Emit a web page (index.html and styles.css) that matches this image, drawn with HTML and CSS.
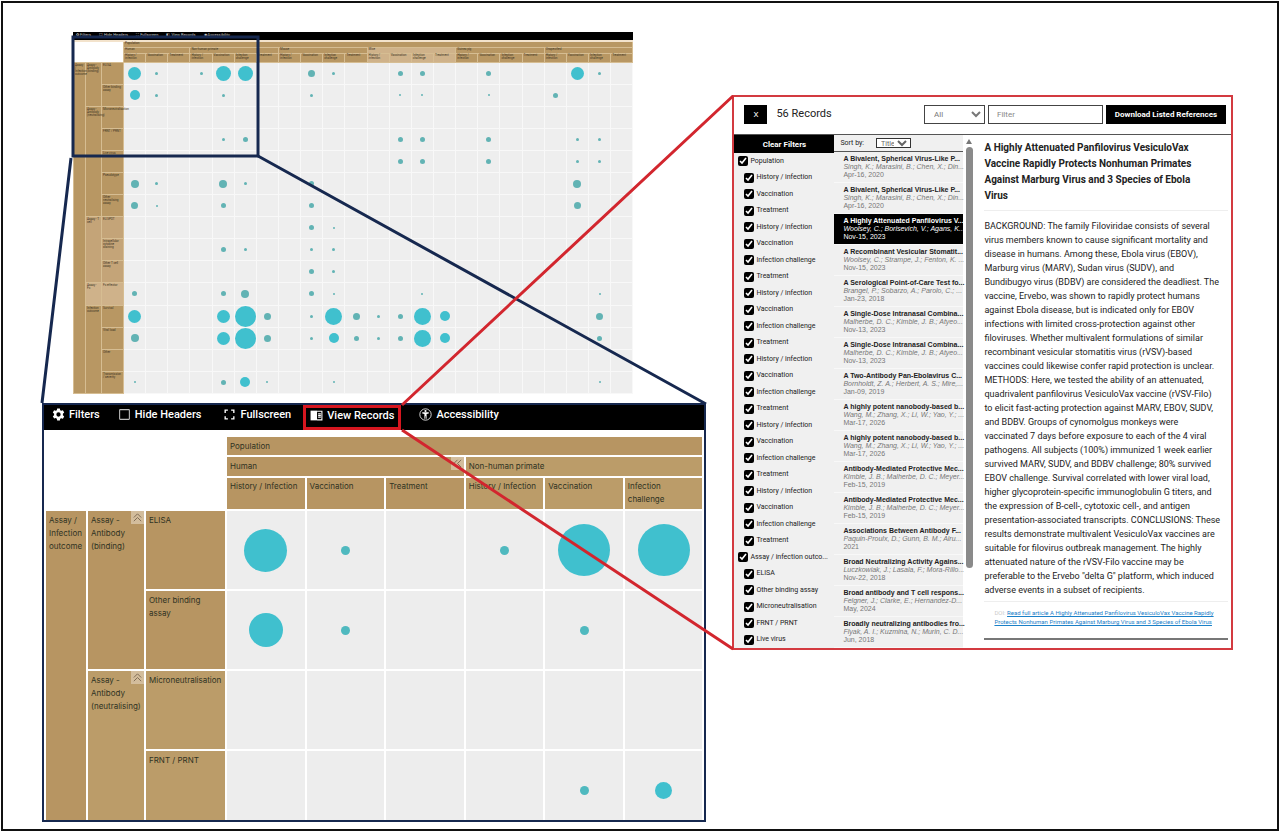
FILE: index.html
```html
<!DOCTYPE html>
<html lang="en">
<head>
   <meta charset="UTF-8">
   <meta name="viewport" content="width=device-width, initial-scale=1.0">
   <title>Evidence map</title>
   <link rel="stylesheet" href="styles.css">
</head>
<body>
   <main class="figure">
      <div class="maps">
         <section class="overview">
            <nav class="mini-bar">
               <span>✿ Filters</span><span>☐ Hide Headers</span><span>⛶ Fullscreen</span><span>◧ View Records</span><span>◉ Accessibility</span>
            </nav>
            <table class="mini-map">
               <colgroup>
                  <col class="mini-a"><col class="mini-b"><col class="mini-c"><col span="23">
               </colgroup>
               <thead id="miniHead"></thead>
               <tbody id="miniBody"></tbody>
            </table>
         </section>

         <section class="detail">
            <nav class="toolbar">
               <button type="button">
                  <svg class="icon" viewBox="0 0 24 24"><path fill="currentColor" fill-rule="evenodd" d="M9.5 1h5l.6 3.2 1.9 1.1 3.1-1.1 2.4 4.2-2.4 2.2v2.8l2.4 2.2-2.4 4.2-3.1-1.1-1.9 1.1-.6 3.2h-5l-.6-3.2L7 18.500l-3.100 1.100-2.400-4.200 2.400-2.200v-2.800L1.500 8.400l2.400-4.200L7 5.300l1.900-1.100zM12 8a4 4 0 1 0 0 8 4 4 0 0 0 0-8z"/></svg>
                  Filters
               </button>
               <button type="button" class="headers">
                  <svg class="icon" viewBox="0 0 24 24"><rect x="3" y="3" width="18" height="18" rx="1" fill="none" stroke="#bbb" stroke-width="2"/></svg>
                  Hide Headers
               </button>
               <button type="button">
                  <svg class="icon" viewBox="0 0 24 24"><path fill="none" stroke="currentColor" stroke-width="2.500" d="M9 4H4v5M15 4h5v5M9 20H4v-5M15 20h5v-5"/></svg>
                  Fullscreen
               </button>
               <button type="button" class="active">
                  <svg class="icon" viewBox="0 0 24 24"><path fill="currentColor" d="M1 3h12v18H1z"/><path fill="none" stroke="currentColor" stroke-width="2" d="M13 4h9v16h-9M15 9h5M15 12h5M15 15h5"/></svg>
                  View Records
               </button>
               <button type="button">
                  <svg class="icon" viewBox="0 0 24 24"><circle cx="12" cy="12" r="10.500" fill="none" stroke="currentColor" stroke-width="1.500"/><circle cx="12" cy="5.500" r="2" fill="currentColor"/><path fill="currentColor" d="M6 8h12v2l-4 1v9h-1.500v-5h-1v5H10v-9l-4-1z"/></svg>
                  Accessibility
               </button>
            </nav>
            <table class="map">
               <colgroup>
                  <col class="col-a"><col class="col-b"><col class="col-c"><col span="6">
               </colgroup>
               <thead>
                  <tr class="row-pop">
                     <td colspan="3" rowspan="3"></td>
                     <th colspan="6">Population</th>
                  </tr>
                  <tr class="row-group">
                     <th colspan="3">Human <button type="button" class="fold" aria-label="Collapse Human"><svg viewBox="0 0 12 12"><path d="M6 2 2 6l4 4M10 2 6 6l4 4"/></svg></button></th>
                     <th colspan="3" class="tan">Non-human primate</th>
                  </tr>
                  <tr class="row-sub">
                     <th>History / Infection</th>
                     <th>Vaccination</th>
                     <th>Treatment</th>
                     <th class="tan">History / Infection</th>
                     <th class="tan">Vaccination</th>
                     <th class="tan">Infection<br>challenge</th>
                  </tr>
               </thead>
               <tbody>
                  <tr>
                     <th rowspan="4">Assay / Infection outcome</th>
                     <th rowspan="2">Assay -<br>Antibody (binding) <button type="button" class="fold" aria-label="Collapse binding"><svg viewBox="0 0 12 12"><path d="M2 6l4-4 4 4M2 10l4-4 4 4"/></svg></button></th>
                     <th>ELISA</th>
                     <td><i class="dot d43"></i></td>
                     <td><i class="dot d9"></i></td>
                     <td></td>
                     <td><i class="dot d9"></i></td>
                     <td><i class="dot d52"></i></td>
                     <td><i class="dot d52"></i></td>
                  </tr>
                  <tr>
                     <th>Other binding<br>assay</th>
                     <td><i class="dot d34"></i></td>
                     <td><i class="dot d9"></i></td>
                     <td></td>
                     <td></td>
                     <td><i class="dot d9"></i></td>
                     <td></td>
                  </tr>
                  <tr>
                     <th rowspan="2" class="tan">Assay -<br>Antibody (neutralising) <button type="button" class="fold" aria-label="Collapse neutralising"><svg viewBox="0 0 12 12"><path d="M2 6l4-4 4 4M2 10l4-4 4 4"/></svg></button></th>
                     <th class="tan">Microneutralisation</th>
                     <td></td><td></td><td></td><td></td><td></td><td></td>
                  </tr>
                  <tr>
                     <th class="tan">FRNT / PRNT</th>
                     <td></td>
                     <td></td>
                     <td></td>
                     <td></td>
                     <td><i class="dot d9"></i></td>
                     <td><i class="dot d17"></i></td>
                  </tr>
               </tbody>
            </table>
         </section>
      </div>

      <section class="records">
         <header class="records-head">
            <button type="button" class="close">X</button>
            <h1>56 Records</h1>
            <select class="scope" aria-label="Field"><option>All</option></select>
            <input class="search" type="text" placeholder="Filter" aria-label="Filter">
            <button type="button" class="download">Download Listed References</button>
         </header>
         <div class="records-body">
            <div class="filters">
               <button type="button" class="clear">Clear Filters</button>
               <div class="filter-list" id="filterList"></div>
            </div>
            <div class="list">
               <div class="sort">
                  <label for="sortBy">Sort by:</label>
                  <select id="sortBy"><option>Title</option></select>
               </div>
               <ul class="record-list" id="recordList"></ul>
            </div>
            <div class="scroll"><span class="arrow"></span><span class="thumb"></span></div>
            <article class="article">
               <h2>A Highly Attenuated Panfilovirus VesiculoVax Vaccine Rapidly Protects Nonhuman Primates Against Marburg Virus and 3 Species of Ebola Virus</h2>
               <p class="abstract">BACKGROUND: The family Filoviridae consists of several
virus members known to cause significant mortality and
disease in humans. Among these, Ebola virus (EBOV),
Marburg virus (MARV), Sudan virus (SUDV), and
Bundibugyo virus (BDBV) are considered the deadliest. The
vaccine, Ervebo, was shown to rapidly protect humans
against Ebola disease, but is indicated only for EBOV
infections with limited cross-protection against other
filoviruses. Whether multivalent formulations of similar
recombinant vesicular stomatitis virus (rVSV)-based
vaccines could likewise confer rapid protection is unclear.
METHODS: Here, we tested the ability of an attenuated,
quadrivalent panfilovirus VesiculoVax vaccine (rVSV-Filo)
to elicit fast-acting protection against MARV, EBOV, SUDV,
and BDBV. Groups of cynomolgus monkeys were
vaccinated 7 days before exposure to each of the 4 viral
pathogens. All subjects (100%) immunized 1 week earlier
survived MARV, SUDV, and BDBV challenge; 80% survived
EBOV challenge. Survival correlated with lower viral load,
higher glycoprotein-specific immunoglobulin G titers, and
the expression of B-cell-, cytotoxic cell-, and antigen
presentation-associated transcripts. CONCLUSIONS: These
results demonstrate multivalent VesiculoVax vaccines are
suitable for filovirus outbreak management. The highly
attenuated nature of the rVSV-Filo vaccine may be
preferable to the Ervebo "delta G" platform, which induced
adverse events in a subset of recipients.</p>
               <p class="source">DOI: <a href="#">Read full article A Highly Attenuated Panfilovirus VesiculoVax Vaccine Rapidly Protects Nonhuman Primates Against Marburg Virus and 3 Species of Ebola Virus</a></p>
            </article>
         </div>
      </section>

      <svg class="callouts" viewBox="0 0 1280 832" preserveAspectRatio="none" aria-hidden="true">
         <g class="navy">
            <rect x="73" y="37" width="185" height="119"/>
            <path d="M71 158 42 403M258 156 706 404"/>
         </g>
         <path class="red" d="M402 405 733 96M402 430 733 649"/>
      </svg>
   </main>
   <script src="script.js"></script>
</body>
</html>
```
FILE: styles.css
```css
body {
   margin: 0;
   background-color: #fff;
   font-family: Roboto, 'Liberation Sans', sans-serif;
   color: #222;
}
* {
   box-sizing: border-box;
}
button, input, select {
   font-family: inherit;
   margin: 0;
}
button {
   cursor: pointer;
}
.figure {
   position: relative;
   display: grid;
   grid-template-columns: 665fr 501fr;
   column-gap: 26px;
   align-items: start;
   min-height: 830px;
   margin: 1px;
   padding: 29px 44px 0 39px;
   border: 2px solid #111;
}

/* overview map */
.overview {
   margin: 0 73px 9px 31px;
}
.mini-bar {
   display: flex;
   gap: 8px;
   height: 8px;
   padding-left: 3px;
   background-color: #000;
   color: #ccc;
   font-size: 4px;
   line-height: 6px;
}
.mini-map {
   width: 100%;
   height: 354px;
   table-layout: fixed;
   border-collapse: collapse;
   border-top: 2px solid #f3e3cc;
}
.mini-a {
   width: 12px;
}
.mini-b {
   width: 16px;
}
.mini-c {
   width: 22px;
}
.mini-map th {
   padding: 1px;
   background-color: #b89763;
   border: 1px solid #d6bd92;
   color: #3d3524;
   font-size: 3px;
   font-weight: normal;
   line-height: 3px;
   text-align: left;
   vertical-align: top;
}
.mini-map .light {
   background-color: #c4a478;
}
.mini-map .lighter {
   background-color: #cfb28a;
}
.mini-map thead th {
   height: 6px;
   padding: 0 1px;
}
.mini-map thead tr:last-child th {
   height: 9px;
}
.mini-map td {
   height: 22px;
   padding: 0;
   background-color: #eee;
   border: 1px solid #f8f8f8;
}
.mini-map thead td {
   height: auto;
   background-color: #fff;
   border: none;
}
.mini-map .wrap {
   display: flex;
   align-items: center;
   justify-content: center;
   height: 21px;
}
.dot {
   display: block;
   margin: 0 auto;
   border-radius: 50%;
   background-color: #40c0ce;
}
.mini-map .dot {
   flex: none;
   margin: 0;
}
.mini-map .small {
   background-color: #62b3b4;
}

/* enlarged corner of the map */
.detail {
   height: 419px;
   overflow: hidden;
   border: 2px solid #16284f;
   background-color: #fff;
}
.toolbar {
   display: flex;
   height: 25px;
   margin-bottom: 5px;
   padding-left: 2px;
   background-color: #000;
}
.toolbar button {
   display: flex;
   align-items: center;
   gap: 4px;
   height: 25px;
   margin-right: 6px;
   padding: 0 6px 6px;
   border: none;
   background: none;
   color: #fff;
   font-size: 11px;
   font-weight: 500;
   white-space: nowrap;
}
.toolbar .headers {
   margin-right: 10px;
}
.toolbar .active {
   margin-right: 12px;
   padding: 0 4px 4px;
   border: 3px solid #d6161f;
}
.icon {
   width: 13px;
   height: 13px;
}
.map {
   width: 100%;
   table-layout: fixed;
   border-spacing: 2px;
   font-family: Inter, Roboto, sans-serif;
}
.col-a {
   width: 40px;
}
.col-b {
   width: 56px;
}
.col-c {
   width: 79px;
}
.map th {
   position: relative;
   padding: 3px 0 0 3px;
   background-color: #b79562;
   color: #2f3323;
   font-size: 8px;
   font-weight: normal;
   line-height: 13px;
   text-align: left;
   vertical-align: top;
}
.map .tan {
   background-color: #bb9c69;
}
.map .row-pop {
   height: 18px;
}
.map .row-group {
   height: 19px;
}
.map .row-sub {
   height: 31px;
}
.map .row-sub th {
   padding-top: 2px;
}
.map tbody tr {
   height: 78px;
}
.map td {
   padding: 0;
   vertical-align: middle;
}
.map tbody td {
   background-color: #ededed;
}
.fold {
   position: absolute;
   top: 0;
   right: 0;
   width: 13px;
   height: 13px;
   padding: 1px;
   border: none;
   background-color: #d3bd9c;
}
.fold svg {
   display: block;
   width: 11px;
   height: 11px;
   fill: none;
   stroke: #7a6650;
}
.d9 {
   width: 9px;
   height: 9px;
   background-color: #4fb9bf;
}
.d17 {
   width: 17px;
   height: 17px;
}
.d34 {
   width: 34px;
   height: 34px;
}
.d43 {
   width: 43px;
   height: 43px;
}
.d52 {
   width: 52px;
   height: 52px;
}

/* records window */
.records {
   display: flex;
   flex-direction: column;
   height: 555px;
   margin-top: 63px;
   border: 2px solid #d33a40;
   background-color: #fff;
}
.records-head {
   display: flex;
   align-items: center;
   height: 38px;
   padding: 0 5px 2px 10px;
   border-bottom: 1px solid #555;
}
.close {
   width: 23px;
   height: 19px;
   padding: 0;
   border: none;
   background-color: #000;
   color: #fff;
   font-size: 8px;
}
.records-head h1 {
   flex: 1;
   margin: 0 0 0 9px;
   padding-bottom: 2px;
   font-size: 11px;
   font-weight: normal;
}
.scope, .search {
   height: 19px;
   border: 1px solid #444;
   border-radius: 0;
   background-color: #fff;
   color: #777;
   font-size: 8px;
}
.scope {
   width: 61px;
   margin-right: 3px;
   padding-left: 5px;
}
.search {
   width: 115px;
   margin-right: 3px;
   padding: 0 8px;
}
.search::placeholder {
   color: #888;
}
.download {
   width: 120px;
   height: 19px;
   padding: 0;
   border: none;
   background-color: #000;
   color: #fff;
   font-size: 8px;
   font-weight: bold;
   white-space: nowrap;
}
.records-body {
   display: flex;
   flex: 1;
   min-height: 0;
}
.filters {
   display: flex;
   flex-direction: column;
   width: 100px;
   background-color: #f0f0f0;
}
.clear {
   height: 18px;
   padding: 0;
   border: none;
   background-color: #000;
   color: #fff;
   font-size: 8px;
   font-weight: bold;
}
.filter-list {
   display: flex;
   flex: 1;
   flex-direction: column;
}
.filter-list label {
   display: flex;
   flex: 1;
   align-items: center;
   gap: 2px;
   padding-left: 10px;
   font-size: 7px;
   line-height: 9px;
   white-space: nowrap;
}
.filter-list .parent {
   padding-left: 4px;
}
.filter-list input {
   width: 10px;
   height: 10px;
   accent-color: #000;
}
.list {
   display: flex;
   flex-direction: column;
   width: 129px;
   background-color: #f0f0f0;
   font-family: 'Liberation Sans', Arial, sans-serif;
}
.sort {
   display: flex;
   align-items: center;
   height: 17px;
   padding-left: 6px;
   border-bottom: 1px solid #555;
   font-family: Roboto, sans-serif;
   font-size: 7px;
}
.sort select {
   width: 35px;
   height: 10px;
   margin-left: 12px;
   padding: 0;
   border: 1px solid #333;
   border-radius: 0;
   background-color: #fff;
   color: #666;
   font-size: 7px;
   line-height: 8px;
}
.record-list {
   display: flex;
   flex: 1;
   flex-direction: column;
   margin: 0;
   padding: 0;
   list-style: none;
}
.record-list li {
   flex: 1;
   padding: 3px 0 0 9px;
   border-bottom: 1px solid #f8f8f8;
   color: #777;
   font-size: 7px;
   line-height: 8px;
   white-space: nowrap;
}
.record-list b, .record-list i {
   display: block;
}
.record-list b {
   color: #222;
}
.record-list .selected, .record-list .selected b {
   background-color: #000;
   color: #fff;
}
.scroll {
   display: flex;
   flex-direction: column;
   align-items: center;
   width: 12px;
   padding-top: 4px;
}
.arrow {
   border: 3px solid transparent;
   border-top: none;
   border-bottom: 5px solid #777;
}
.thumb {
   width: 7px;
   height: 421px;
   margin-top: 3px;
   border-radius: 4px;
   background-color: #8a8a8a;
}
.article {
   flex: 1;
   padding: 5px 3px 0 9px;
}
.article h2 {
   margin: 0;
   padding: 0 20px 6px 0;
   border-bottom: 1px solid #eee;
   font-size: 10px;
   font-weight: bold;
   line-height: 16px;
}
.abstract {
   margin: 8px 0 4px;
   font-size: 9px;
   line-height: 14px;
   white-space: pre-line;
}
.source {
   margin: 0;
   padding: 6px 8px 12px 10px;
   border-top: 1px solid #eee;
   border-bottom: 2px solid #777;
   color: #ccc;
   font-size: 6px;
   line-height: 9px;
}
.source a {
   color: #1a80c8;
}

/* lines joining each part to its enlargement */
.callouts {
   position: absolute;
   top: -3px;
   left: -3px;
   width: calc(100% + 6px);
   height: 832px;
   pointer-events: none;
   fill: none;
}
.navy {
   stroke: #16284f;
   stroke-width: 3;
}
.red {
   stroke: #d2262e;
   stroke-width: 3;
}
```
FILE: script.js
```js
const groups = [
    ['Human', 3, ''], ['Non-human primate', 4, ''], ['Mouse', 4, ''],
    ['Mice', 4, 'lighter'], ['Guinea pig', 4, ''], ['Unspecified', 4, '']
];

// label, category, category span, shade, [column, diameter] pairs
const rows = [
    ['ELISA', 'Assay - Antibody (binding)', 2, '', [[0, 13], [1, 3], [3, 3], [4, 15], [5, 15], [8, 7], [9, 3], [12, 5], [13, 5], [16, 5], [20, 13], [21, 3]]],
    ['Other binding assay', '', 0, '', [[0, 10], [1, 3], [4, 3], [8, 3], [12, 2], [13, 2], [16, 2], [19, 5]]],
    ['Microneutralisation', 'Assay - Antibody (neutralising)', 5, 'tan', []],
    ['FRNT / PRNT', '', 0, 'tan', [[4, 3], [5, 5], [12, 5], [13, 5], [16, 5], [20, 3], [21, 3]]],
    ['Live virus', '', 0, 'tan', [[12, 5], [13, 5], [16, 5], [20, 3], [21, 3]]],
    ['Pseudotype', '', 0, 'tan', [[0, 8], [1, 3], [4, 8], [5, 3], [8, 5], [20, 8]]],
    ['Other neutralising assay', '', 0, 'tan', [[0, 7], [1, 2], [4, 5], [8, 5], [20, 7]]],
    ['ELISPOT', 'Assay - T cell', 3, 'light', [[8, 5], [9, 2]]],
    ['Intracellular cytokine staining', '', 0, 'light', [[4, 5], [5, 3], [8, 3], [9, 3]]],
    ['Other T cell assay', '', 0, 'light', [[8, 5], [9, 3]]],
    ['Fc effector', 'Assay - Fc', 1, 'lighter', [[0, 5], [4, 5], [5, 8], [8, 5], [9, 2], [13, 2], [21, 2]]],
    ['Survival', 'Infection outcome', 4, '', [[0, 13], [4, 13], [5, 21], [6, 7], [8, 3], [9, 17], [10, 7], [11, 3], [12, 5], [13, 17], [14, 10], [21, 7]]],
    ['Viral load', '', 0, '', [[0, 8], [4, 13], [5, 21], [6, 7], [8, 3], [9, 10], [10, 5], [11, 3], [12, 5], [13, 17], [14, 10], [21, 5]]],
    ['Other', '', 0, '', []],
    ['Transmission / severity', '', 0, '', [[0, 2], [4, 5], [5, 10], [6, 2], [9, 2], [21, 2]]]
];

let head = '<tr><td colspan="3" rowspan="3"></td><th colspan="23">Population</th></tr><tr>';
let subs = '<tr>';
groups.forEach(([name, span, shade]) => {
    head += `<th colspan="${span}" class="${shade}">${name}</th>`;
    const labels = span === 3
        ? ['History / infection', 'Vaccination', 'Treatment']
        : ['History / infection', 'Vaccination', 'Infection challenge', 'Treatment'];
    labels.forEach(label => subs += `<th class="${shade}">${label}</th>`);
});
document.getElementById('miniHead').innerHTML = head + '</tr>' + subs + '</tr>';

document.getElementById('miniBody').innerHTML = rows.map(([label, category, span, shade, dots], index) => {
    let html = '<tr>';
    if (index === 0) html += `<th rowspan="${rows.length}">Assay / Infection outcome</th>`;
    if (span) html += `<th rowspan="${span}" class="${shade}">${category}</th>`;
    html += `<th class="${shade}">${label}</th>`;
    for (let col = 0; col < 23; col++) {
        const dot = dots.find(d => d[0] === col);
        html += dot
            ? `<td><div class="wrap"><i class="dot ${dot[1] < 9 ? 'small' : ''}" style="width:${dot[1]}px;height:${dot[1]}px"></i></div></td>`
            : '<td></td>';
    }
    return html + '</tr>';
}).join('');

const species = ['History / infection', 'Vaccination', 'Infection challenge', 'Treatment'];
const filters = [
    '*Population', 'History / infection', 'Vaccination', 'Treatment',
    ...species, ...species, ...species, ...species, ...species,
    '*Assay / infection outco...', 'ELISA', 'Other binding assay', 'Microneutralisation', 'FRNT / PRNT', 'Live virus'
];
document.getElementById('filterList').innerHTML = filters.map(name => {
    const parent = name.startsWith('*');
    return `<label class="${parent ? 'parent' : ''}"><input type="checkbox" checked>${name.replace('*', '')}</label>`;
}).join('');

const records = [
    ['A Bivalent, Spherical Virus-Like P...', 'Singh, K.; Marasini, B.; Chen, X.; Din...', 'Apr-16, 2020'],
    ['A Bivalent, Spherical Virus-Like P...', 'Singh, K.; Marasini, B.; Chen, X.; Din...', 'Apr-16, 2020'],
    ['A Highly Attenuated Panfilovirus V...', 'Woolsey, C.; Borisevich, V.; Agans, K...', 'Nov-15, 2023'],
    ['A Recombinant Vesicular Stomatit...', 'Woolsey, C.; Strampe, J.; Fenton, K. ...', 'Nov-15, 2023'],
    ['A Serological Point-of-Care Test fo...', 'Brangel, P.; Sobarzo, A.; Parolo, C.; ...', 'Jan-23, 2018'],
    ['A Single-Dose Intranasal Combina...', 'Malherbe, D. C.; Kimble, J. B.; Atyeo...', 'Nov-13, 2023'],
    ['A Single-Dose Intranasal Combina...', 'Malherbe, D. C.; Kimble, J. B.; Atyeo...', 'Nov-13, 2023'],
    ['A Two-Antibody Pan-Ebolavirus C...', 'Bornholdt, Z. A.; Herbert, A. S.; Mire,...', 'Jan-09, 2019'],
    ['A highly potent nanobody-based b...', 'Wang, M.; Zhang, X.; Li, W.; Yao, Y.; ...', 'Mar-17, 2026'],
    ['A highly potent nanobody-based b...', 'Wang, M.; Zhang, X.; Li, W.; Yao, Y.; ...', 'Mar-17, 2026'],
    ['Antibody-Mediated Protective Mec...', 'Kimble, J. B.; Malherbe, D. C.; Meyer...', 'Feb-15, 2019'],
    ['Antibody-Mediated Protective Mec...', 'Kimble, J. B.; Malherbe, D. C.; Meyer...', 'Feb-15, 2019'],
    ['Associations Between Antibody F...', 'Paquin-Proulx, D.; Gunn, B. M.; Alru...', '2021'],
    ['Broad Neutralizing Activity Agains...', 'Luczkowiak, J.; Lasala, F.; Mora-Rillo...', 'Nov-22, 2018'],
    ['Broad antibody and T cell respons...', 'Felgner, J.; Clarke, E.; Hernandez-D...', 'May, 2024'],
    ['Broadly neutralizing antibodies fro...', 'Flyak, A. I.; Kuzmina, N.; Murin, C. D...', 'Jun, 2018']
];
document.getElementById('recordList').innerHTML = records.map(([title, authors, date], index) =>
    `<li class="${index === 2 ? 'selected' : ''}"><b>${title}</b><i>${authors}</i>${date}</li>`
).join('');
```
